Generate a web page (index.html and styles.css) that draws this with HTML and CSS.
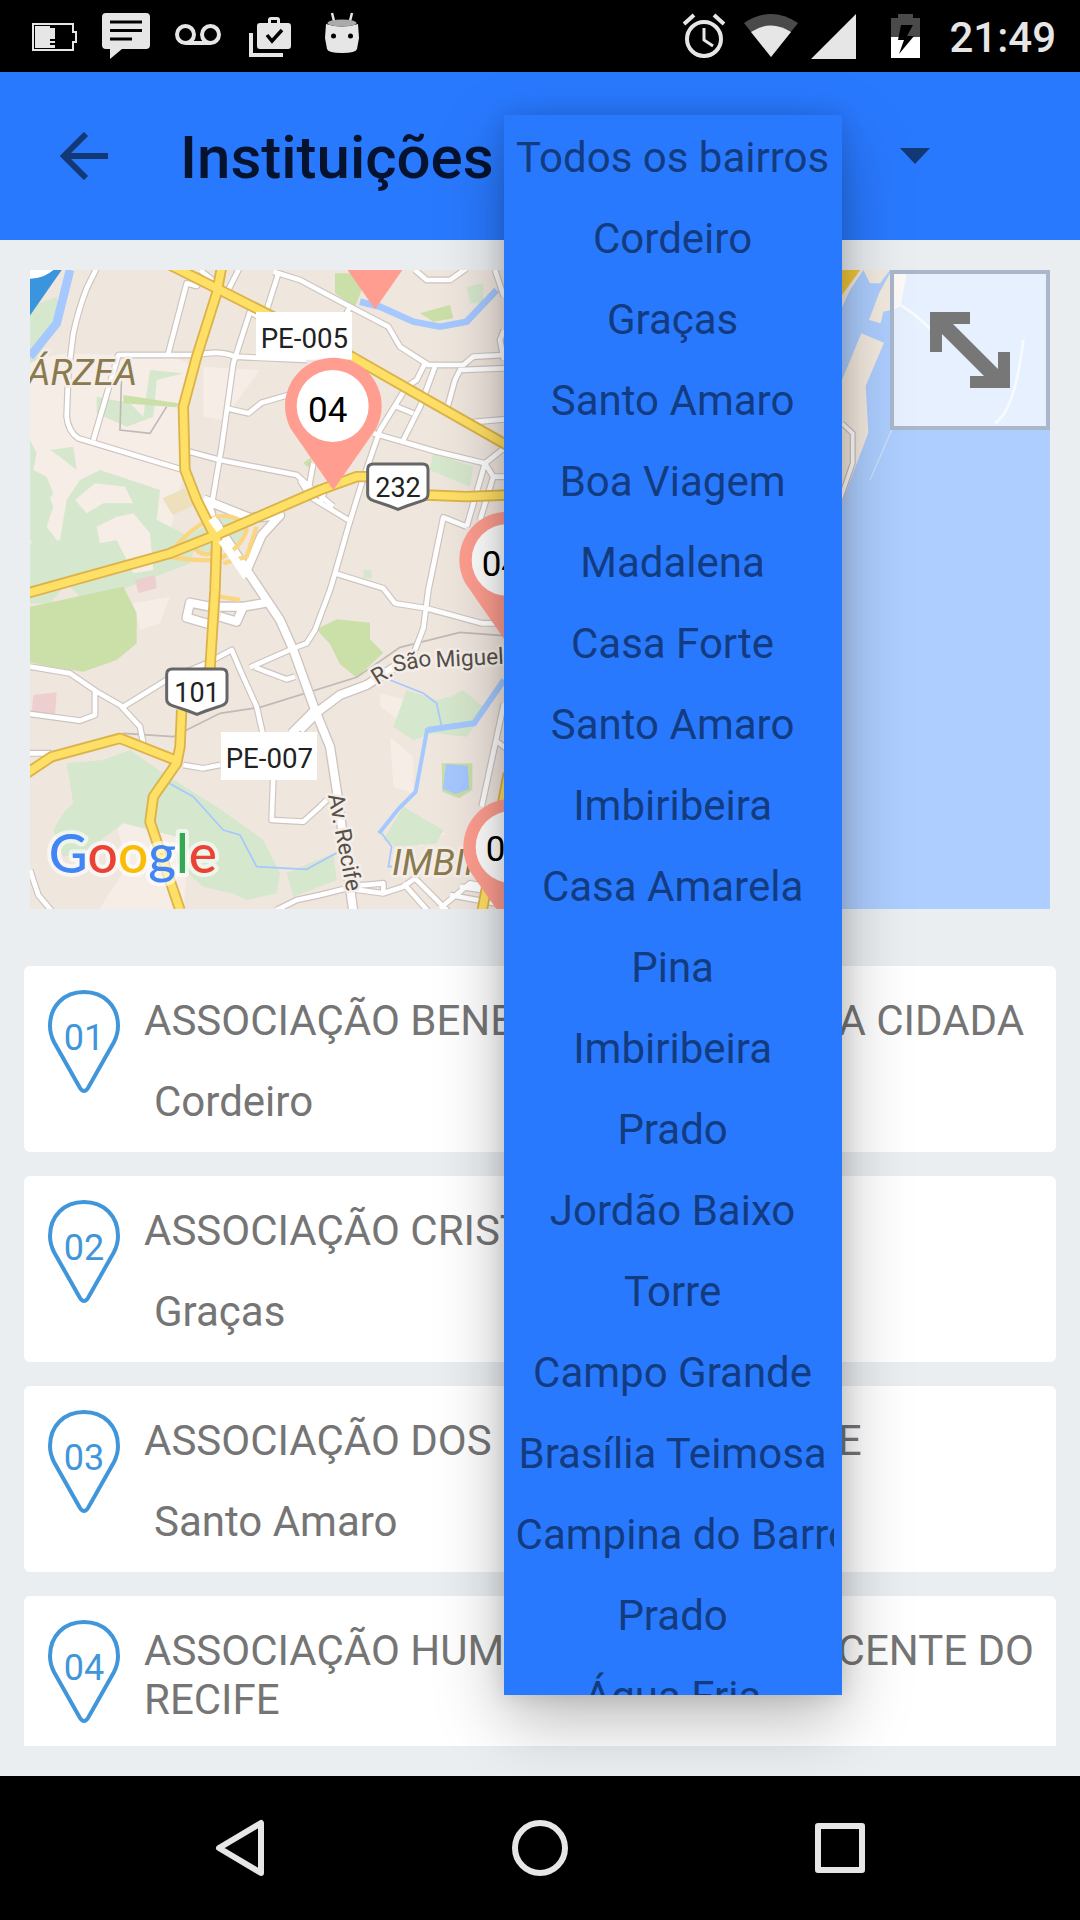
FILE: index.html
```html
<!DOCTYPE html>
<html lang="pt-BR">
<head>
<meta charset="utf-8">
<meta name="viewport" content="width=device-width, initial-scale=1">
<title>Instituições</title>
<link rel="stylesheet" href="styles.css">
</head>
<body>
<div class="status-bar">
  <div class="status-notices">
    <svg class="notice" viewBox="0 0 48 48" aria-hidden="true"><path d="M3 12h40v8h3v10h-3v8H3z" fill="none" stroke="#e6e6e6" stroke-width="2"/><path d="M5 14h15v2h5v11h-5v2h5v2h-5v2h5v3H5z" fill="#e6e6e6"/></svg>
    <svg class="notice" viewBox="0 0 48 48" aria-hidden="true"><path d="M4 1h40q4 0 4 4v28q0 4-4 4H20L8 47V37H4q-4 0-4-4V5q0-4 4-4zM8 8.500v3h32v-3zM8 17v3h32v-3zM8 25.500v3h22v-3z" fill="#e6e6e6" fill-rule="evenodd"/></svg>
    <svg class="notice" viewBox="0 0 48 48" fill="none" stroke="#e6e6e6" stroke-width="4" aria-hidden="true"><circle cx="11.500" cy="22.500" r="8.500"/><circle cx="36.500" cy="22.500" r="8.500"/><path d="M11.500 31h25"/></svg>
    <svg class="notice" viewBox="0 0 48 48" aria-hidden="true"><path d="M5 21v22h32" fill="none" stroke="#e6e6e6" stroke-width="4"/><path d="M14 11h8V8q0-3 3-3h6q3 0 3 3v3h8q3 0 3 3v20q0 3-3 3H14q-3 0-3-3V14q0-3 3-3zm11 0h6V8h-6z" fill="#e6e6e6" fill-rule="evenodd"/><path d="M21 23l5 6 10-11" fill="none" stroke="#000" stroke-width="3.500"/></svg>
    <svg class="notice" viewBox="0 0 48 48" aria-hidden="true"><path d="M14 1l2 8M34 1l-2 8" stroke="#e6e6e6" stroke-width="2.500"/><path d="M8 12q16 5 32 0l1 14-2 11q-1 4-15 4T9 37L7 26z" fill="#e6e6e6"/><ellipse cx="24" cy="11" rx="14.500" ry="3.500" fill="#aaa"/><circle cx="15.500" cy="24" r="2.500"/><circle cx="32.500" cy="24" r="2.500"/></svg>
  </div>
  <div class="status-system">
    <svg class="alarm" viewBox="0 0 54 48" fill="none" stroke="#e6e6e6" aria-hidden="true"><circle cx="27" cy="27" r="17" stroke-width="4"/><path d="M27 16v12l9 6" stroke-width="3"/><path d="M7 12l10-9M47 12L37 3" stroke-width="4"/></svg>
    <svg class="wifi" viewBox="0 0 54 48" aria-hidden="true"><path d="M0 11Q27-7 54 11L27 45z" fill="#4a4a4a"/><path d="M7 20q20-13 40 0L27 45z" fill="#e6e6e6"/></svg>
    <svg class="signal" viewBox="0 0 46 48" aria-hidden="true"><path d="M45 2v45H0z" fill="#e6e6e6"/></svg>
    <svg class="battery" viewBox="0 0 66 48" aria-hidden="true"><path d="M21 6h7V2h15v4h7v19H21z" fill="#4a4a4a"/><path d="M21 25h29v21H21z" fill="#fff"/><path d="M31 13h12l-6 11h7L29 42l5-14h-6z"/></svg>
    <time class="clock">21:49</time>
  </div>
</div>

<header class="toolbar">
  <button class="back" type="button" aria-label="Voltar">
    <svg viewBox="0 0 48 48" aria-hidden="true"><path d="M48 24H4M26 2L4 24l22 22" fill="none" stroke="#133876" stroke-width="6"/></svg>
  </button>
  <h1 class="title">Instituições</h1>
  <div class="district">
    <label class="hidden-label" for="district">Bairro</label>
    <select class="district-select" id="district">
      <option>Todos os bairros</option>
    </select>
    <svg class="caret" viewBox="0 0 30 16" aria-hidden="true"><path d="M0 0h30L15 16z" fill="#133876"/></svg>
    <ul class="menu" role="listbox" aria-label="Bairros">
      <li><button type="button">Todos os bairros</button></li>
      <li><button type="button">Cordeiro</button></li>
      <li><button type="button">Graças</button></li>
      <li><button type="button">Santo Amaro</button></li>
      <li><button type="button">Boa Viagem</button></li>
      <li><button type="button">Madalena</button></li>
      <li><button type="button">Casa Forte</button></li>
      <li><button type="button">Santo Amaro</button></li>
      <li><button type="button">Imbiribeira</button></li>
      <li><button type="button">Casa Amarela</button></li>
      <li><button type="button">Pina</button></li>
      <li><button type="button">Imbiribeira</button></li>
      <li><button type="button">Prado</button></li>
      <li><button type="button">Jordão Baixo</button></li>
      <li><button type="button">Torre</button></li>
      <li><button type="button">Campo Grande</button></li>
      <li><button type="button">Brasília Teimosa</button></li>
      <li><button type="button">Campina do Barreto</button></li>
      <li><button type="button">Prado</button></li>
      <li><button type="button">Água Fria</button></li>
    </ul>
  </div>
</header>

<main class="content">
  <section class="map" aria-label="Mapa">
    <svg class="map-drawing" viewBox="30 30 3060 1917" preserveAspectRatio="xMidYMid slice">
      <defs>
        <path id="pin" d="M0 252L-128 68Q-145 35-145 0A145 145 0 0 1 145 0Q145 35 128 68Z"/>
        <g id="streets">
          <path d="M232 20L200 85Q175 150 160 220L145 340 140 470Q145 515 175 535L490 630M445 280L500 70l30 8 12-20M510 50l90 30M220 540L295 285H530Q600 270 645 290L860 300M575 735L605 560 640 310 690 155l25 15M740 150L775 40M660 20l-35 70M540 30l50 40"/>
          <path d="M760 35l80 25 150 80 115 60 35 60 85 55h105l30-25 92-5M990 140l-20 40M620 445l65 15 40-32 80-23M500 573l100 27 230 45 50 45 60 50M865 690l15-80M1060 520l190 55 145 35 57-45M1215 310l-25 50-30 20-80 130-55 160-40 130-40 140-15 50-45 120-25 40-40 15-130 57M705 1222l95 36 25-8"/>
          <path d="M1245 320l-45 120-50 100M1130 440l50 20M1452 325l-132 5-15 30-25 90M1452 478l-112 10M1395 610l-55 190M1395 610l25 40h32M1420 650l-40 130M1340 800l-70-28-45 218-15 115-25 65M840 660l30 50 115 70M900 730l15-40M945 940l145 45 35 45 95 15 165 45h67M1185 30l35 30h70l50-35M1425 30l27 80M1452 210l-12 30 12 60"/>
          <path d="M30 1220l120 20 80 55 70 40 60 65 10 50M310 1340l130-80 120-50 75-40 30 70 45 100 25 110M225 1290v75l-45 17-150-20M30 1480h65M490 1515l60 10 50-10M760 1550l-5 130 95 5 50-45 20-20M30 1830l25 75 50 60M770 1950l60-30 70-15 80-20 110 15 60-20 35-25M1150 1870l80 90M1185 1855l100 100M1000 1890v-12l90-8v25M1260 1945l90-75 100 20M1290 1905l162 30M1320 1880l132 20M1452 1330l-67 310M1425 1440l40 30"/>
        </g>
        <path id="avenues" d="M560 720l15 50 105 160 40 60 60 90 40 90 65 180 45 110 20 130 50 365M840 1410l60-60 60-45 80-30 110-70M885 1350l-70 70M550 718l140 56 90-8-55 60-45 105M570 1040l-60-12-10 45 70 20M600 1070l50 15 20-45-70 0M670 1040l70-12"/>
        <g id="highways">
          <path d="M450 15L600 90l395 200 175 100 290 165M605 20L590 100 530 290 490 440 495 630 530 720 590 840 585 990 570 1225M485 1350l-5 110-10 50-70 100-10 75 90 265"/>
          <path d="M20 1000L450 880 600 820 900 690 1010 650h30l180 55 120 5 120-5M20 1540l75-50 205-55 165 65M1465 1540L1385 1960"/>
        </g>
      </defs>
      <path fill="#efe6de" d="M0 0h3100v1960H0z"/>
      <g fill="#f6ede7">
        <path d="M30 300l110-20 310 10 60 20-20 330-40 180-160 160H30zM550 320l170 10-110 150-60-10zM320 1500l200 120-30 340H230l90-140-30-130zM340 1030l110-20-30 80-60 20zM1080 1300l80 20 40 50-50 20-70-50zM1110 1430l70 60v110l-60-20zM1180 1710l100 10-80 40zM30 1150h60v60H30z"/>
      </g>
      <g fill="#d5e7cc">
        <path d="M30 140l80-30 10 60-70 130-20 10zM30 540l20 40-10 50 40 20 20 50-40 60 30 60-70 20zM230 410l100 20 40 40 20-140 100 10-80 20-10 110-80 30-90-40z"/>
        <path d="M30 630l40 30 30 80-20 60 30 40-50 40-30-40zM90 570l70-10 10 70-50-40zM30 850l90-10 20-120 40-60 60-30 180 60-10 90 120 60-20 70-310 120-60-60-50 60H30z"/>
        <path d="M250 1500l80-30 100 70 160 100 140 100 50 100-10 60-90 20-130-60-80-130-160-40-120 90-60 10-30-80 30-50 30-30-20-120zM470 1600l90 40 80 80 100 120-60 70-130-30-80-70zM800 1840l140-60 10 80-130 50zM1160 1290l90 30 40-10 40-20 70 60-60 80-100-10-60 20-60-40zM1150 1640l120 70-20 40-120 10-40-20zM1240 580l120 40-10 60-120-50z"/>
        <path d="M500 830l70-40 60-30 60 30-40 70-120 20zM1030 930h25v25h-25zM1340 80l50-10v60h-40z"/>
      </g>
      <path fill="#f6ede7" d="M165 720l60-50 90 10 25 50-90 0-50 30zM230 800l60-30 50-10 50 60 10 110-60 10-50-100-50 10z"/>
      <g fill="#cbdfa8">
        <path d="M30 1040l280-60 40 80v90l-60 50-100 35-100-15-90-20zM890 1108l60-30 100 10v50l40 40-80 75-50-40-30-60zM945 40l70 0 10 50-20 50-60-40zM1200 160l90-25 10 40-60 10zM1265 1510h92v80l-40 25-50-20zM310 405l165 25-5 12-160-12zM850 610l25-20v40z"/>
      </g>
      <path fill="#eedfbd" d="M428 715l65-30 40 45-75 35z"/>
      <path fill="#eecfcf" d="M345 960l60-15 5 40-55 15zM40 1305l70-8-5 70-70-10z"/>
      <g fill="none" stroke="#a5c8ff">
        <path stroke-width="26" d="M150 30l-40 160-80 100"/>
        <path stroke-width="20" d="M1020 125l60 15 100 45 80 15 80-15 90-95"/>
        <path stroke-width="18" d="M1452 1260l-90 130-140 20"/>
        <path stroke-width="12" d="M1222 1405l-35 190-50 50-60 75"/>
        <path stroke-width="5" d="M1110 1260l100 40 40 30 15 70M430 1560l90 50 90 100 50 15 50 95 150 8 110-60M1085 1720l30 40-10 60h90"/>
      </g>
      <path fill="#a5c8ff" d="M1278 1512l65 5 5 70-40 15-40-15z"/>
      <path d="M310 1420l150 10 140-70 120-18 290-90 130-90 180-45 130 10M305 340l-5 170 90 10 50-80" fill="none" stroke="#c0b9b8" stroke-width="5"/>
      <use href="#streets" class="street-edge"/>
      <use href="#avenues" class="avenue-edge"/>
      <use href="#streets" class="street"/>
      <use href="#avenues" class="avenue"/>
      <path d="M450 880q60-80 140-110 70-10 90 40-20 60-90 90-70 5-140-10M520 860q30 40 70 10M610 910l70-20 30-90M600 1010l60 10" class="ramp"/>
      <use href="#highways" class="highway-edge"/>
      <use href="#highways" class="highway"/>
      <path d="M575 775l25 35M605 840l75 110" class="avenue"/>

      <path fill="#adceff" d="M2400 0h700v1960H2300z"/>
      <path fill="#f3eadf" d="M2440 30h90l-40 60-50 110zM2530 30h80l-30 40-30 0zM2610 40h50l-18 100-30 10-22 5-8 35-35-10 30-80zM2524 220l68 28-55 130 8 140-79 210V360z"/>
      <path fill="#f0c63c" d="M2440 20h88l-80 110z"/>
      <path d="M2466 490l32 30v90l-38 110" fill="none" stroke="#c8bdb7" stroke-width="18"/>
      <path d="M2466 490l32 30v90l-38 110" fill="none" stroke="#fff" stroke-width="11"/>
      <path d="M2620 125q50 20 120 90M3010 240q-25 210-85 250" fill="none" stroke="#e8f0fc" stroke-width="8"/>
      <path d="M2615 510l-65 150" fill="none" stroke="#cfe0fa" stroke-width="4"/>

      <g class="place">
        <text x="22" y="375">ÁRZEA</text>
        <text x="1116" y="1846">IMBIRIBEIRA</text>
      </g>
      <g class="road-name">
        <text transform="translate(1072 1276) rotate(-32)">R.</text>
        <text transform="translate(1122 1236) rotate(-10)">São</text>
        <text transform="translate(1248 1222) rotate(-3)">Miguel</text>
        <text transform="translate(924 1606) rotate(79)">Av. Recife</text>
      </g>
      <path fill="#fff" d="M708 156h288v143H708zM603 1416h288v144H603z"/>
      <g class="road-code">
        <text x="722" y="264">PE-005</text>
        <text x="617" y="1524">PE-007</text>
      </g>
      <path class="shield" d="M1060 612h148q16 0 16 16v74q0 14-16 20l-48 16-26 10-26-10-48-16q-17-6-17-20v-74q0-16 17-16zM457 1227h148q16 0 16 16v74q0 14-16 20l-48 16-26 10-26-10-48-16q-17-6-17-20v-74q0-16 17-16z"/>
      <g class="shield-code">
        <text x="1134" y="710">232</text>
        <text x="531" y="1325">101</text>
      </g>
      <g fill="#ff9e90">
        <use href="#pin" x="1065" y="-104"/>
        <use href="#pin" x="940" y="438"/>
        <use href="#pin" x="1463" y="900"/>
        <use href="#pin" x="1475" y="1761"/>
      </g>
      <use href="#pin" x="18" y="-68" fill="#3b94de"/>
      <g fill="#fff">
        <circle cx="30" cy="-52" r="108"/>
        <circle cx="938" cy="438" r="108"/>
        <circle cx="1463" cy="900" r="108"/>
        <circle cx="1475" cy="1761" r="108"/>
      </g>
      <g class="pin-code">
        <text x="864" y="485">04</text>
        <text x="1385" y="947">04</text>
        <text x="1397" y="1804">05</text>
      </g>
      <text class="google" x="86" y="1840"><tspan fill="#4285f4">G</tspan><tspan fill="#ea4335">o</tspan><tspan fill="#fbbc05">o</tspan><tspan fill="#4285f4">g</tspan><tspan fill="#34a853">l</tspan><tspan fill="#ea4335">e</tspan></text>
    </svg>
    <button class="expand" type="button" aria-label="Expandir mapa">
      <svg viewBox="0 0 80 76" aria-hidden="true"><path d="M0 0h40v12H23l45 45V40h12v36H40V64h14L12 22v18H0z" fill="#777"/></svg>
    </button>
  </section>

  <ul class="places">
    <li class="card">
      <svg class="marker" viewBox="0 0 72 104" role="img"><path d="M32 98L6 52Q2 44 2 36C2 16 16 2 36 2s34 14 34 34q0 8-4 16L40 98q-4 6-8 0z"/><text x="36" y="60">01</text></svg>
      <div class="card-text"><h2>ASSOCIAÇÃO BENEFICENTE CRIANÇA CIDADA</h2><p>Cordeiro</p></div>
    </li>
    <li class="card">
      <svg class="marker" viewBox="0 0 72 104" role="img"><path d="M32 98L6 52Q2 44 2 36C2 16 16 2 36 2s34 14 34 34q0 8-4 16L40 98q-4 6-8 0z"/><text x="36" y="60">02</text></svg>
      <div class="card-text"><h2>ASSOCIAÇÃO CRISTÃ FEMININA</h2><p>Graças</p></div>
    </li>
    <li class="card">
      <svg class="marker" viewBox="0 0 72 104" role="img"><path d="M32 98L6 52Q2 44 2 36C2 16 16 2 36 2s34 14 34 34q0 8-4 16L40 98q-4 6-8 0z"/><text x="36" y="60">03</text></svg>
      <div class="card-text"><h2>ASSOCIAÇÃO DOS IDOSOS DO RECIFE</h2><p>Santo Amaro</p></div>
    </li>
    <li class="card">
      <svg class="marker" viewBox="0 0 72 104" role="img"><path d="M32 98L6 52Q2 44 2 36C2 16 16 2 36 2s34 14 34 34q0 8-4 16L40 98q-4 6-8 0z"/><text x="36" y="60">04</text></svg>
      <div class="card-text"><h2>ASSOCIAÇÃO HUMANITÁRIA BENEFICENTE DO RECIFE</h2><p>Boa Viagem</p></div>
    </li>
  </ul>
</main>

<nav class="system-nav" aria-label="Sistema">
  <button type="button" aria-label="Voltar"><svg viewBox="0 0 60 60" aria-hidden="true"><path d="M51 5v50L9 30z"/></svg></button>
  <button type="button" aria-label="Início"><svg viewBox="0 0 60 60" aria-hidden="true"><circle cx="30" cy="30" r="25"/></svg></button>
  <button type="button" aria-label="Recentes"><svg viewBox="0 0 60 60" aria-hidden="true"><path d="M8 8h44v44H8z"/></svg></button>
</nav>
</body>
</html>
```
FILE: styles.css
```css
* {
  box-sizing: border-box;
}

body {
  margin: 0;
  height: 100vh;
  display: flex;
  flex-direction: column;
  overflow: hidden;
  background: #eaeef1;
  color: #757575;
  font: 42px/49px Roboto, sans-serif;
}

button,
select {
  margin: 0;
  padding: 0;
  border: 0;
  background: none;
  color: inherit;
  font: inherit;
}

ul {
  margin: 0;
  padding: 0;
  list-style: none;
}

svg {
  display: block;
}

/* Status bar */

.status-bar {
  flex: none;
  height: 72px;
  padding: 0 24px 0 30px;
  display: flex;
  justify-content: space-between;
  align-items: center;
  background: #000;
  color: #e6e6e6;
}

.status-notices {
  display: flex;
  gap: 24px;
}

.notice {
  width: 48px;
  height: 48px;
}

.status-system {
  display: flex;
  align-items: center;
  gap: 13px;
}

.alarm,
.wifi {
  width: 54px;
  height: 48px;
}

.signal {
  width: 46px;
  height: 48px;
}

.battery {
  width: 66px;
  height: 48px;
}

.clock {
  padding-top: 2px;
  font-weight: 500;
}

/* Toolbar */

.toolbar {
  flex: none;
  height: 168px;
  padding-left: 60px;
  display: flex;
  align-items: center;
  background: #2979ff;
}

.back svg {
  width: 48px;
  height: 48px;
}

.title {
  margin: 0 0 0 72px;
  padding-top: 4px;
  color: #05132e;
  font-size: 60px;
  font-weight: 500;
  line-height: 72px;
}

.district {
  position: relative;
  width: 426px;
  margin-left: 10px;
  display: flex;
  align-items: center;
  color: #133c80;
}

.hidden-label {
  position: absolute;
  width: 1px;
  height: 1px;
  overflow: hidden;
  clip-path: inset(50%);
}

.district-select {
  flex: 1;
  height: 82px;
  padding-left: 12px;
  appearance: none;
}

.caret {
  width: 30px;
  height: 16px;
}

.menu {
  position: absolute;
  top: 0;
  left: 0;
  z-index: 2;
  width: 338px;
  height: calc(100vh - 340px);
  padding-top: 2px;
  overflow-y: auto;
  scrollbar-width: none;
  background: #2979ff;
  box-shadow: 0 0 20px rgba(0, 0, 0, 0.12), 0 24px 64px rgba(0, 0, 0, 0.28);
}

.menu li {
  padding: 0 8px;
}

.menu button {
  display: block;
  width: 100%;
  height: 81px;
  padding: 0 4px;
  overflow: hidden;
  white-space: nowrap;
  text-align: center;
}

/* Map */

.content {
  flex: 1;
  min-height: 0;
  padding: 30px 24px;
  display: flex;
  flex-direction: column;
}

.map {
  position: relative;
  flex: none;
  margin: 0 6px 57px;
}

.map-drawing {
  width: 100%;
}

.street,
.street-edge,
.avenue,
.avenue-edge,
.highway,
.highway-edge,
.ramp {
  fill: none;
  stroke-linejoin: round;
}

.street-edge,
.avenue-edge {
  stroke: #cdc4c0;
}

.street,
.avenue {
  stroke: #fff;
}

.street-edge {
  stroke-width: 21;
}

.street {
  stroke-width: 14;
}

.avenue-edge {
  stroke-width: 32;
}

.avenue {
  stroke-width: 24;
}

.ramp {
  stroke: #fbd580;
  stroke-width: 13;
}

.highway-edge {
  stroke: #dcb34a;
  stroke-width: 34;
}

.highway {
  stroke: #ffe066;
  stroke-width: 23;
}

.place,
.road-name {
  stroke: #f5eee8;
  stroke-width: 16;
  stroke-linejoin: round;
  paint-order: stroke;
}

.place {
  fill: #8a7a4e;
  font-size: 110px;
  font-style: italic;
}

.road-name {
  fill: #55504a;
  font-size: 68px;
}

.road-code {
  fill: #222;
  font-size: 83px;
}

.shield {
  fill: #fff;
  stroke: #666;
  stroke-width: 9;
}

.shield-code {
  fill: #222;
  font-size: 81px;
  text-anchor: middle;
}

.pin-code {
  fill: #000;
  font-size: 105px;
}

.google {
  font-family: Lato, sans-serif;
  font-size: 160px;
  font-weight: 500;
  stroke: rgba(255, 255, 255, 0.6);
  stroke-width: 24;
  stroke-linejoin: round;
  paint-order: stroke;
}

.expand {
  position: absolute;
  top: 0;
  right: 0;
  width: 160px;
  height: 160px;
  display: flex;
  align-items: center;
  justify-content: center;
  border: 4px solid #aab6ca;
  background: rgba(255, 255, 255, 0.7);
}

.expand svg {
  width: 80px;
  height: 76px;
}

/* Cards */

.places {
  flex: 1;
  min-height: 0;
  overflow: hidden;
  display: flex;
  flex-direction: column;
  gap: 24px;
}

.card {
  flex: none;
  display: flex;
  gap: 24px;
  padding: 24px 12px 26px 24px;
  border-radius: 6px;
  background: #fff;
}

.marker {
  flex: none;
  width: 72px;
  height: 104px;
}

.marker path {
  fill: none;
  stroke: #4196da;
  stroke-width: 4;
}

.marker text {
  fill: #4196da;
  font-size: 36px;
  text-anchor: middle;
}

.card-text {
  padding-top: 6px;
}

.card h2,
.card p {
  margin: 0;
  font-size: 42px;
  font-weight: 400;
  line-height: 49px;
}

.card p {
  padding: 32px 0 0 10px;
}

/* System navigation */

.system-nav {
  flex: none;
  height: 144px;
  padding: 0 90px;
  display: flex;
  background: #000;
}

.system-nav button {
  flex: 1;
  display: flex;
  align-items: center;
  justify-content: center;
}

.system-nav svg {
  width: 60px;
  height: 60px;
  fill: none;
  stroke: #e6e6e6;
  stroke-width: 6;
  stroke-linejoin: round;
}
```
